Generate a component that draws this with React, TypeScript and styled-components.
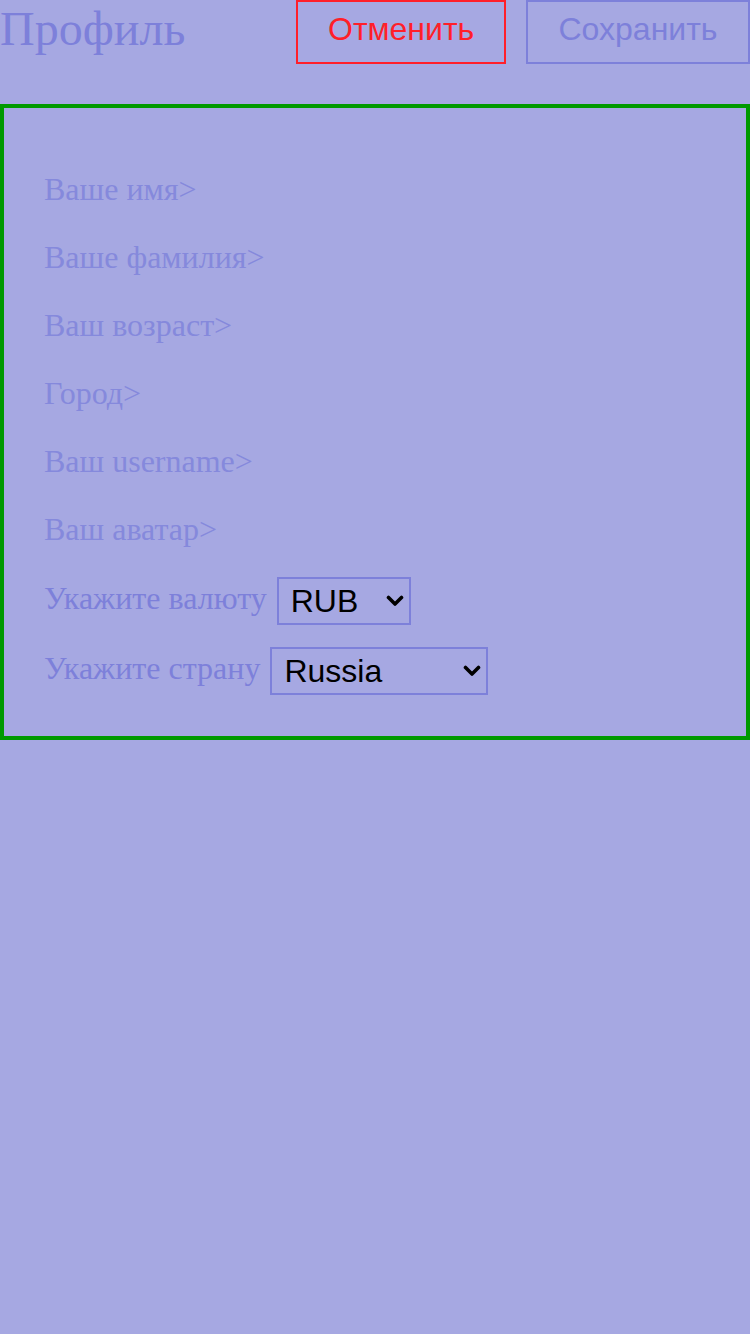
import { useState } from "react";
import styled, { createGlobalStyle } from "styled-components";

const GlobalStyle = createGlobalStyle`
  html, body {
    margin: 0;
    padding: 0;
    background: #a6a8e2;
    min-height: 100%;
  }
  body {
    font-family: "Liberation Serif", "Times New Roman", serif;
  }
`;

const fields = [
  "Ваше имя>",
  "Ваше фамилия>",
  "Ваш возраст>",
  "Город>",
  "Ваш username>",
  "Ваш аватар>",
];

const Chevron = () => (
  <ChevronIcon width="18" height="12" viewBox="0 0 18 12">
    <path
      d="M2.5 2.5 L9 9 L15.5 2.5"
      fill="none"
      stroke="#000"
      strokeWidth="3.6"
      strokeLinecap="round"
      strokeLinejoin="round"
    />
  </ChevronIcon>
);

function App() {
  const [currency, setCurrency] = useState("RUB");
  const [country, setCountry] = useState("Russia");

  return (
    <Page>
      <GlobalStyle />
      <Header>
        <Title>Профиль</Title>
        <Buttons>
          <Button $variant="cancel">Отменить</Button>
          <Button $variant="save">Сохранить</Button>
        </Buttons>
      </Header>

      <Form>
        {fields.map((f) => (
          <Row key={f}>{f}</Row>
        ))}
        <SelectRow>
          Укажите валюту
          <SelectWrap $width={134}>
            <Select
              value={currency}
              onChange={(e) => setCurrency(e.target.value)}
            >
              <option value="RUB">RUB</option>
              <option value="USD">USD</option>
              <option value="EUR">EUR</option>
            </Select>
            <Chevron />
          </SelectWrap>
        </SelectRow>
        <SelectRow>
          Укажите страну
          <SelectWrap $width={218}>
            <Select
              value={country}
              onChange={(e) => setCountry(e.target.value)}
            >
              <option value="Russia">Russia</option>
              <option value="Belarus">Belarus</option>
              <option value="Kazakhstan">Kazakhstan</option>
            </Select>
            <Chevron />
          </SelectWrap>
        </SelectRow>
      </Form>
    </Page>
  );
}

export default App;

const Page = styled.div`
  min-height: 100vh;
  background: #a6a8e2;
  color: #7d80da;
`;

const Header = styled.header`
  display: flex;
  justify-content: space-between;
  align-items: flex-start;
  height: 64px;
`;

const Title = styled.h1`
  margin: 0;
  font-size: 48px;
  font-weight: 400;
  line-height: 58px;
  color: #7d80da;
`;

const Buttons = styled.div`
  display: flex;
  gap: 20px;
`;

const Button = styled.button<{ $variant: "cancel" | "save" }>`
  height: 64px;
  padding: 0 30px 8px;
  margin: 0;
  background: transparent;
  font-family: "Liberation Sans", Arial, sans-serif;
  font-size: 32px;
  line-height: 54px;
  border: 2px solid
    ${({ $variant }) => ($variant === "cancel" ? "#ff1f2a" : "#7d80da")};
  color: ${({ $variant }) => ($variant === "cancel" ? "#ff1f2a" : "#7d80da")};
  cursor: pointer;

  &:first-child {
    width: 210px;
  }
  &:last-child {
    width: 224px;
  }
`;

const Form = styled.section`
  margin-top: 40px;
  border: 4px solid #009900;
  padding: 47px 40px 33px;
  display: flex;
  flex-direction: column;
`;

const Row = styled.div`
  height: 68px;
  display: flex;
  align-items: center;
  font-size: 32px;
  color: #8589dc;
`;

const SelectRow = styled.label`
  height: 70px;
  display: flex;
  align-items: center;
  gap: 10px;
  font-size: 32px;
  color: #7d80da;
`;

const SelectWrap = styled.div<{ $width: number }>`
  position: relative;
  width: ${({ $width }) => $width}px;
  height: 48px;
  margin-top: 6px;
`;

const Select = styled.select`
  appearance: none;
  -webkit-appearance: none;
  box-sizing: border-box;
  width: 100%;
  height: 100%;
  font-family: "Liberation Sans", Arial, sans-serif;
  font-size: 32px;
  color: #000;
  background: transparent;
  border: 2px solid #7d80da;
  border-radius: 0;
  padding: 0 34px 0 12px;
  outline: none;
`;

const ChevronIcon = styled.svg`
  position: absolute;
  right: 7px;
  top: 18px;
  pointer-events: none;
`;
